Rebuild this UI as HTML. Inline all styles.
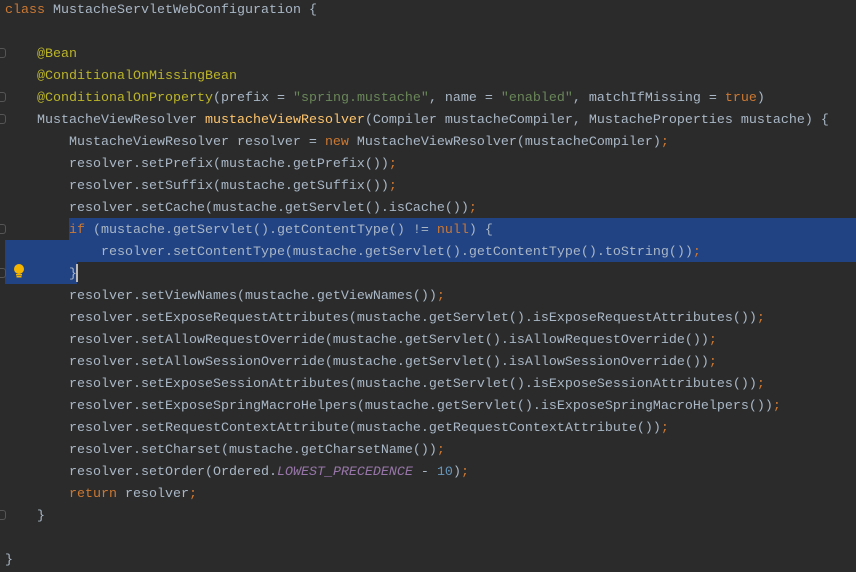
<!DOCTYPE html>
<html><head><style>
body{margin:0;background:#2b2b2b;width:856px;height:571px;overflow:hidden;position:relative}
.l{position:absolute;left:5px;height:22px;line-height:22px;margin-top:2px;font-family:"Liberation Mono",monospace;font-size:13.33px;color:#a9b7c6;white-space:pre}
.k{color:#cc7832}.a{color:#bbb529}.s{color:#6a8759}.m{color:#ffc66d}.c{color:#9876aa;font-style:italic}.n{color:#6897bb}
.sel{position:absolute;background:#214283}
.f{position:absolute;left:0;width:5px;height:8px;border:1px solid #555;border-left:none;border-radius:0 3px 3px 0}
</style></head><body>
<div class="sel" style="left:69px;top:218px;width:787px;height:22px"></div>
<div class="sel" style="left:5px;top:240px;width:851px;height:22px"></div>
<div class="sel" style="left:5px;top:262px;width:72px;height:22px"></div>
<div style="position:absolute;left:76px;top:264px;width:2px;height:18px;background:#bbb"></div>
<div class="f" style="top:48px"></div><div class="f" style="top:92px"></div><div class="f" style="top:114px"></div><div class="f" style="top:224px"></div><div class="f" style="top:268px"></div><div class="f" style="top:510px"></div>
<svg style="position:absolute;left:12px;top:263px" width="14" height="16"><circle cx="7" cy="6" r="5" fill="#f4b400"/><rect x="4" y="11" width="6" height="1.5" fill="#f4b400"/><rect x="4.5" y="13" width="5" height="1.5" fill="#f4b400"/></svg>
<div class="l" style="top:-2px"><span class="k">class</span> MustacheServletWebConfiguration {</div>
<div class="l" style="top:42px">    <span class="a">@Bean</span></div>
<div class="l" style="top:64px">    <span class="a">@ConditionalOnMissingBean</span></div>
<div class="l" style="top:86px">    <span class="a">@ConditionalOnProperty</span>(prefix = <span class="s">"spring.mustache"</span>, name = <span class="s">"enabled"</span>, matchIfMissing = <span class="k">true</span>)</div>
<div class="l" style="top:108px">    MustacheViewResolver <span class="m">mustacheViewResolver</span>(Compiler mustacheCompiler, MustacheProperties mustache) {</div>
<div class="l" style="top:130px">        MustacheViewResolver resolver = <span class="k">new</span> MustacheViewResolver(mustacheCompiler)<span class="k">;</span></div>
<div class="l" style="top:152px">        resolver.setPrefix(mustache.getPrefix())<span class="k">;</span></div>
<div class="l" style="top:174px">        resolver.setSuffix(mustache.getSuffix())<span class="k">;</span></div>
<div class="l" style="top:196px">        resolver.setCache(mustache.getServlet().isCache())<span class="k">;</span></div>
<div class="l" style="top:218px">        <span class="k">if</span> (mustache.getServlet().getContentType() != <span class="k">null</span>) {</div>
<div class="l" style="top:240px">            resolver.setContentType(mustache.getServlet().getContentType().toString())<span class="k">;</span></div>
<div class="l" style="top:262px">        }</div>
<div class="l" style="top:284px">        resolver.setViewNames(mustache.getViewNames())<span class="k">;</span></div>
<div class="l" style="top:306px">        resolver.setExposeRequestAttributes(mustache.getServlet().isExposeRequestAttributes())<span class="k">;</span></div>
<div class="l" style="top:328px">        resolver.setAllowRequestOverride(mustache.getServlet().isAllowRequestOverride())<span class="k">;</span></div>
<div class="l" style="top:350px">        resolver.setAllowSessionOverride(mustache.getServlet().isAllowSessionOverride())<span class="k">;</span></div>
<div class="l" style="top:372px">        resolver.setExposeSessionAttributes(mustache.getServlet().isExposeSessionAttributes())<span class="k">;</span></div>
<div class="l" style="top:394px">        resolver.setExposeSpringMacroHelpers(mustache.getServlet().isExposeSpringMacroHelpers())<span class="k">;</span></div>
<div class="l" style="top:416px">        resolver.setRequestContextAttribute(mustache.getRequestContextAttribute())<span class="k">;</span></div>
<div class="l" style="top:438px">        resolver.setCharset(mustache.getCharsetName())<span class="k">;</span></div>
<div class="l" style="top:460px">        resolver.setOrder(Ordered.<span class="c">LOWEST_PRECEDENCE</span> - <span class="n">10</span>)<span class="k">;</span></div>
<div class="l" style="top:482px">        <span class="k">return</span> resolver<span class="k">;</span></div>
<div class="l" style="top:504px">    }</div>
<div class="l" style="top:548px">}</div>
</body></html>
